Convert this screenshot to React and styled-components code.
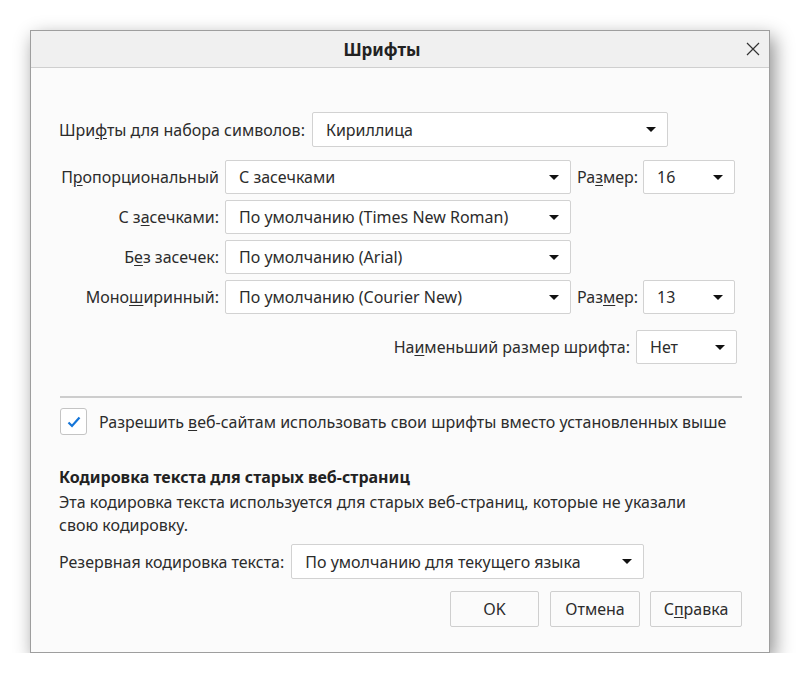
import React from 'react';
import styled, { createGlobalStyle } from 'styled-components';

const GlobalStyle = createGlobalStyle`
  html, body {
    margin: 0;
    padding: 0;
    background: #ffffff;
  }
  body {
    font-family: "Noto Sans", "Open Sans", sans-serif;
    font-size: 16px;
    color: #2c2c2c;
  }
`;

const Page = styled.div`
  padding: 30px 0 0 30px;
`;

const Dialog = styled.div`
  width: 738px;
  height: 621px;
  border: 1px solid #9e9e9e;
  background: #fbfbfb;
  box-shadow: 4px 7px 18px rgba(0, 0, 0, 0.45);
  display: flex;
  flex-direction: column;
`;

const TitleBar = styled.div`
  height: 36px;
  background: #f0f0f0;
  border-bottom: 1px solid #cfcfcf;
  position: relative;
  display: flex;
  align-items: center;
  justify-content: center;
  padding-right: 36px;
`;

const Title = styled.div`
  font-weight: 700;
  font-size: 17px;
  color: #222;
`;

const Close = styled.div`
  position: absolute;
  right: 9px;
  top: 11px;
  width: 14px;
  height: 14px;
  svg { display: block; }
`;

const Body = styled.div`
  padding: 44px 27px 0 28px;
  display: flex;
  flex-direction: column;
`;

const Row = styled.div`
  display: flex;
  align-items: center;
  gap: ${p => p.gap || 7}px;
  justify-content: ${p => (p.right ? 'flex-end' : 'flex-start')};
  margin-right: ${p => p.mr || 0}px;
  margin-top: ${p => p.mt || 0}px;
`;

const FontGrid = styled.div`
  display: grid;
  grid-template-columns: 160px 346px 60px 92px;
  column-gap: 6px;
  row-gap: 6px;
  align-items: center;
  margin-top: 13px;
`;

const Label = styled.span`
  white-space: nowrap;
  text-align: ${p => (p.right ? 'right' : 'left')};
`;

const SelectBox = styled.div`
  box-sizing: border-box;
  height: ${p => p.h || 34}px;
  width: ${p => p.w ? `${p.w}px` : 'auto'};
  border: 1px solid #d2d2d2;
  border-radius: 2px;
  background: #fff;
  display: flex;
  align-items: center;
  justify-content: space-between;
  padding: 0 11px 0 13px;
  white-space: nowrap;
`;

const Arrow = styled.span`
  width: 0;
  height: 0;
  border-left: 5px solid transparent;
  border-right: 5px solid transparent;
  border-top: 5px solid #111;
`;

const Separator = styled.div`
  height: 2px;
  background: #cdcdcd;
  margin: 32px 0 0 1px;
`;

const CheckRow = styled.div`
  display: flex;
  align-items: center;
  gap: 12px;
  margin-top: 10px;
  margin-left: 1px;
`;

const CheckBox = styled.div`
  box-sizing: border-box;
  width: 27px;
  height: 27px;
  border: 1px solid #c4c4c4;
  border-radius: 3px;
  background: #fff;
  display: flex;
  align-items: center;
  justify-content: center;
`;

const Heading = styled.div`
  font-weight: 700;
  margin-top: 31px;
  color: #222;
`;

const Description = styled.div`
  line-height: 23px;
  margin-top: 3px;
  max-width: 645px;
`;

const Buttons = styled.div`
  display: flex;
  justify-content: flex-end;
  gap: 10px;
  margin-top: 12px;
`;

const Button = styled.div`
  box-sizing: border-box;
  width: ${p => p.w}px;
  height: 36px;
  border: 1px solid #cfcfcf;
  border-radius: 2px;
  background: #fbfbfb;
  display: flex;
  align-items: center;
  justify-content: center;
`;

const U = styled.span`
  text-decoration: underline;
  text-underline-offset: 2px;
`;

function Select({ value, w, h }) {
  return (
    <SelectBox w={w} h={h}>
      <span>{value}</span>
      <Arrow />
    </SelectBox>
  );
}

export default function App() {
  return (
    <>
      <GlobalStyle />
      <Page>
        <Dialog>
          <TitleBar>
            <Title>Шрифты</Title>
            <Close>
              <svg width="14" height="14" viewBox="0 0 14 14">
                <path d="M1 1L13 13M13 1L1 13" stroke="#333" strokeWidth="1.2" />
              </svg>
            </Close>
          </TitleBar>
          <Body>
            <Row gap={7}>
              <Label>Шри<U>ф</U>ты для набора символов:</Label>
              <Select value="Кириллица" w={356} h={35} />
            </Row>
            <FontGrid>
              <Label right>П<U>р</U>опорциональный</Label>
              <Select value="С засечками" />
              <Label>Ра<U>з</U>мер:</Label>
              <Select value="16" />

              <Label right>С з<U>а</U>сечками:</Label>
              <Select value="По умолчанию (Times New Roman)" />
              <span />
              <span />

              <Label right>Б<U>е</U>з засечек:</Label>
              <Select value="По умолчанию (Arial)" />
              <span />
              <span />

              <Label right>Моно<U>ш</U>иринный:</Label>
              <Select value="По умолчанию (Courier New)" />
              <Label>Раз<U>м</U>ер:</Label>
              <Select value="13" />
            </FontGrid>
            <Row right gap={6} mr={5} mt={16}>
              <Label>На<U>и</U>меньший размер шрифта:</Label>
              <Select value="Нет" w={101} />
            </Row>
            <Separator />
            <CheckRow>
              <CheckBox>
                <svg width="14" height="12" viewBox="0 0 14 12">
                  <path d="M1.5 6.5L5 10L12.5 1.5" fill="none" stroke="#1475d8" strokeWidth="2.2" />
                </svg>
              </CheckBox>
              <Label>Разрешить <U>в</U>еб-сайтам использовать свои шрифты вместо установленных выше</Label>
            </CheckRow>
            <Heading>Кодировка текста для старых веб-страниц</Heading>
            <Description>
              Эта кодировка текста используется для старых веб-страниц, которые не указали свою кодировку.
            </Description>
            <Row gap={7} mt={7}>
              <Label>Резервная кодировка текста:</Label>
              <Select value="По умолчанию для текущего языка" w={353} h={35} />
            </Row>
            <Buttons>
              <Button w={89}>OK</Button>
              <Button w={90} style={{ marginLeft: 1 }}>Отмена</Button>
              <Button w={92}>С<U>п</U>равка</Button>
            </Buttons>
          </Body>
        </Dialog>
      </Page>
    </>
  );
}
